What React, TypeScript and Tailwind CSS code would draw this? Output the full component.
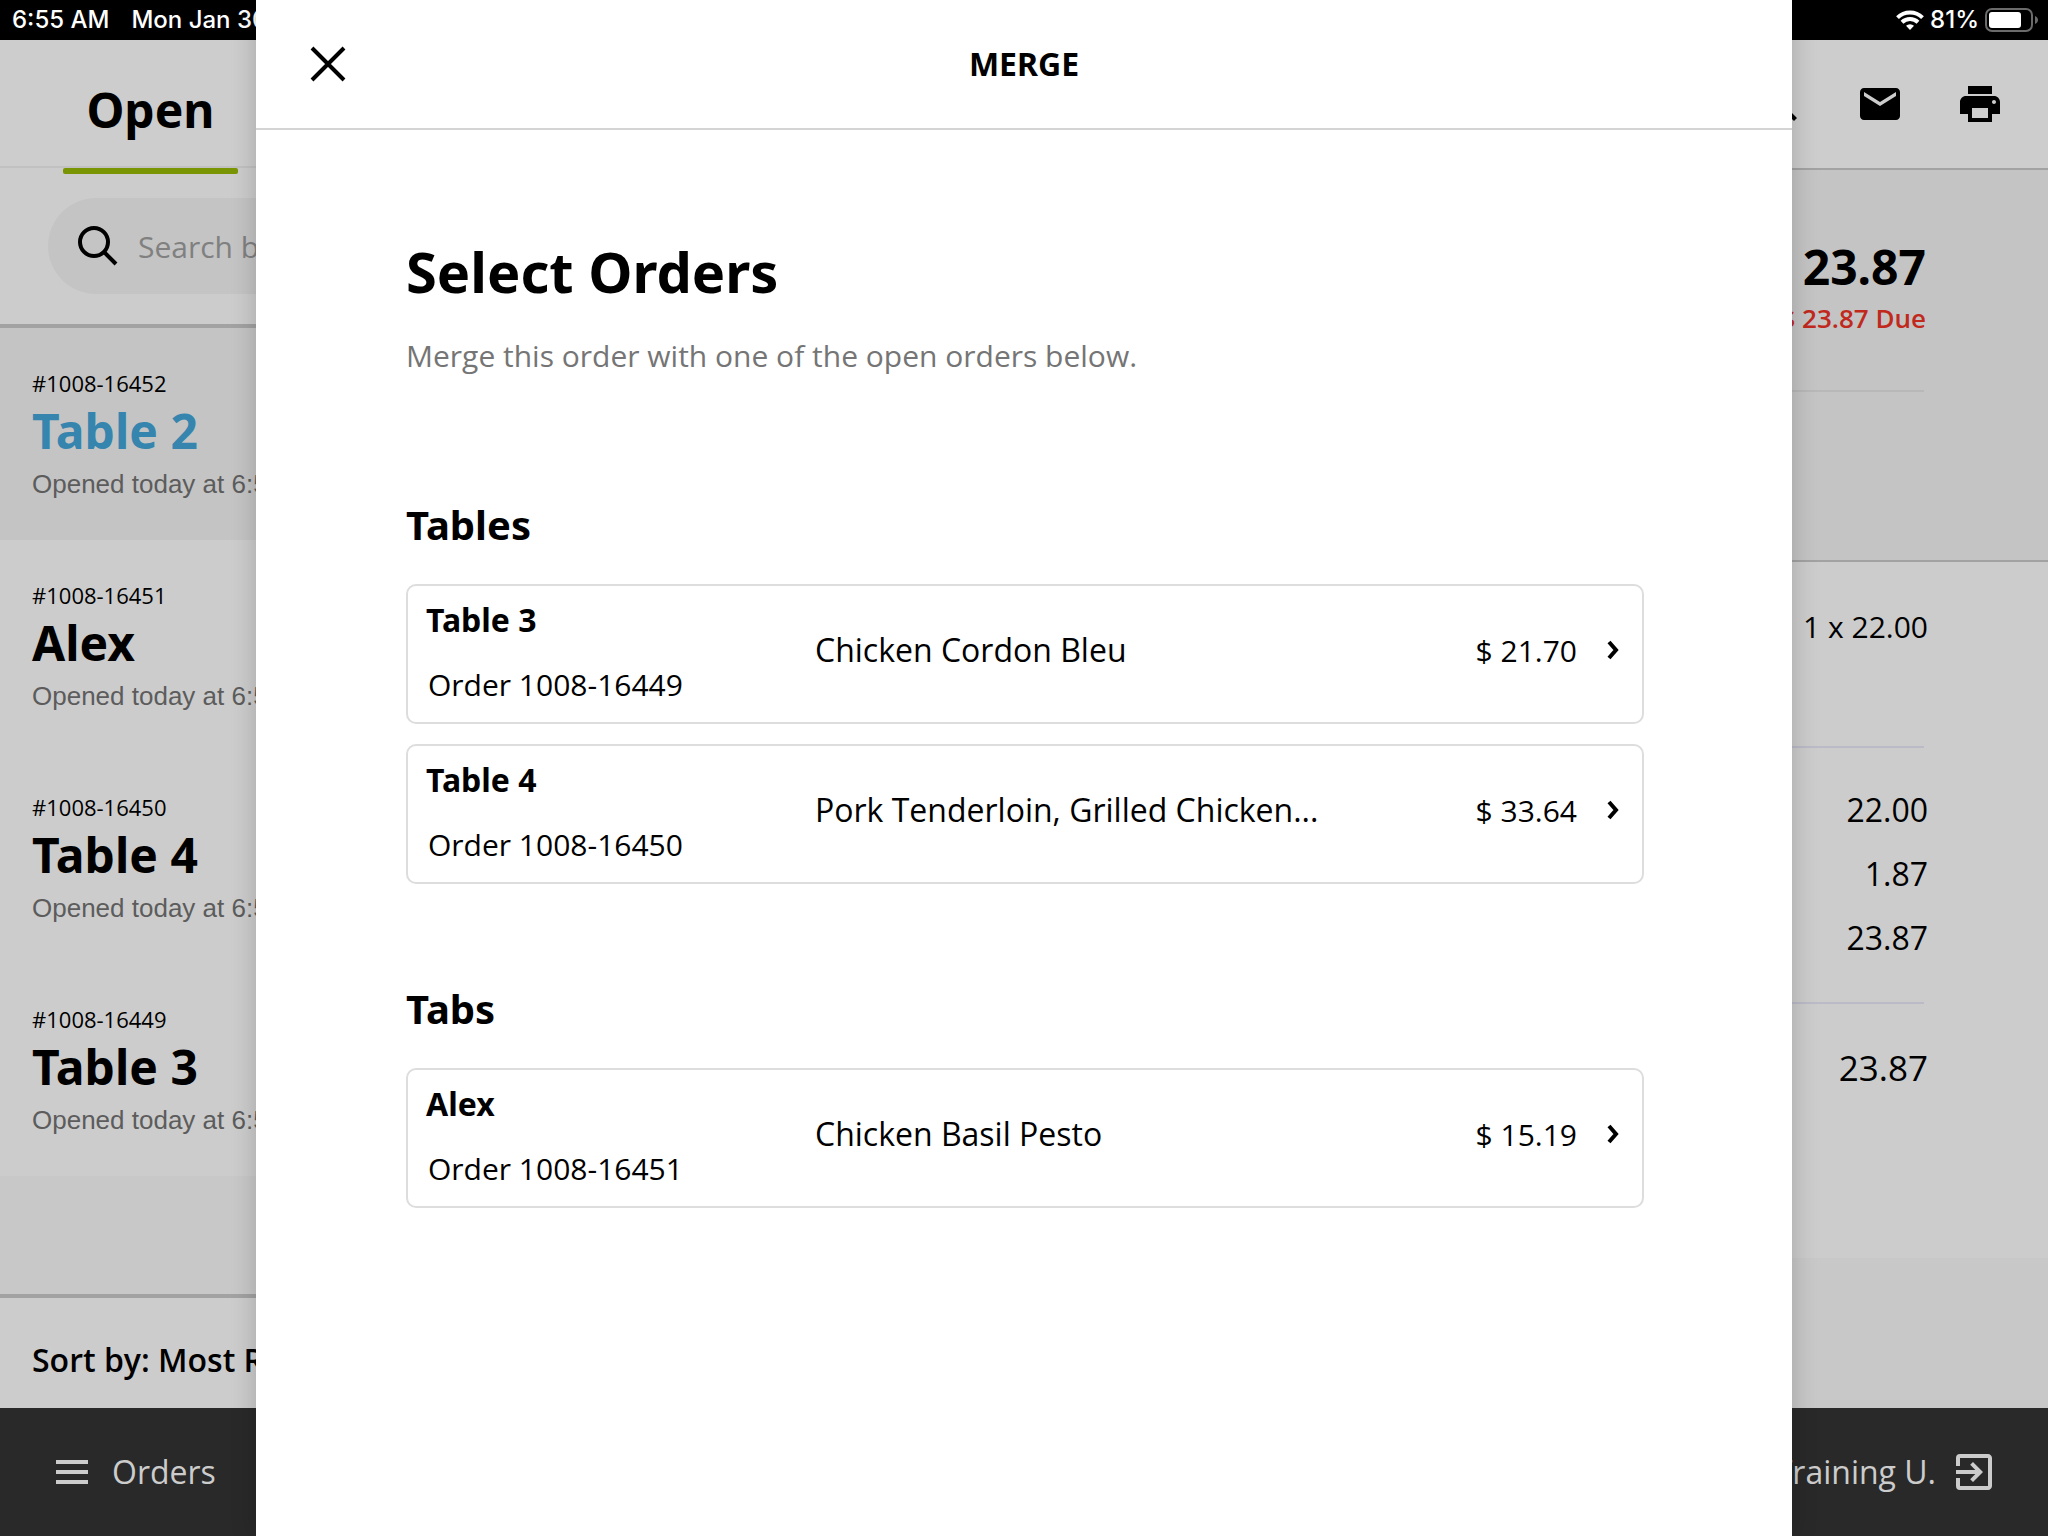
import { MdExitToApp, MdMail, MdPrint, MdSearch } from "react-icons/md"

const openOrders = [
  { id: "1008-16452", name: "Table 2", time: "Opened today at 6:54 AM" },
  { id: "1008-16451", name: "Alex", time: "Opened today at 6:53 AM" },
  { id: "1008-16450", name: "Table 4", time: "Opened today at 6:52 AM" },
  { id: "1008-16449", name: "Table 3", time: "Opened today at 6:51 AM" },
]

const groups = [
  {
    title: "Tables",
    orders: [
      { name: "Table 3", id: "1008-16449", items: "Chicken Cordon Bleu", total: "$ 21.70" },
      { name: "Table 4", id: "1008-16450", items: "Pork Tenderloin, Grilled Chicken...", total: "$ 33.64" },
    ],
  },
  {
    title: "Tabs",
    orders: [{ name: "Alex", id: "1008-16451", items: "Chicken Basil Pesto", total: "$ 15.19" }],
  },
]

const StatusBar = () => {
  return (
    <div className="flex h-10 shrink-0 items-center justify-between bg-black pr-2.5 pl-3 font-[Inter,sans-serif] text-2xl font-medium text-white">
      <div className="flex gap-[22px]">
        <span>6:55 AM</span>
        <span>Mon Jan 30</span>
      </div>
      <div className="flex items-center gap-1.5">
        <svg width="28" height="20" viewBox="0 0 28 20" fill="none" stroke="white" strokeWidth="4">
          <path d="M1.5 7.6a18 18 0 0 1 25 0" />
          <path d="M6 12.2a11.6 11.6 0 0 1 16 0" />
          <path d="M14 20l-4-4.2a6 6 0 0 1 8 0z" fill="white" stroke="none" />
        </svg>
        <span>81%</span>
        <svg width="53" height="24" viewBox="0 0 53 24">
          <rect x="1" y="1" width="46" height="22" rx="6" fill="none" stroke="#6b6b6b" strokeWidth="2" />
          <rect x="4" y="4" width="32" height="16" rx="3" fill="white" />
          <path d="M50 8c4 1.500 4 6.500 0 8z" fill="#6b6b6b" />
        </svg>
      </div>
    </div>
  )
}

const OrderList = () => {
  return (
    <aside className="flex w-[38%] shrink-0 flex-col bg-[#cccccc]">
      <div className="flex h-32 shrink-0 border-b-2 border-[#c1c1c1] bg-[#cdcdcd] pl-[63px]">
        <button className="relative h-32 w-[175px] pt-3 font-['Noto_Sans',sans-serif] text-[48px] leading-[116px] font-bold">
          Open
          <span className="absolute -bottom-1.5 left-0 h-1.5 w-full rounded-xs bg-[#7a9504]" />
        </button>
      </div>
      <div className="shrink-0 border-b-4 border-[#a2a2a2] px-12 pt-[30px] pb-[30px]">
        <label className="flex h-24 items-center gap-5 rounded-full bg-[#c4c4c4] pl-[29px]">
          <svg width="41" height="41" viewBox="0 0 41 41" fill="none" stroke="black" strokeWidth="4" className="mb-0.5 shrink-0">
            <circle cx="17" cy="17" r="14" />
            <path d="M27 27l12 12" />
          </svg>
          <input
            type="text"
            aria-label="Search orders"
            placeholder="Search by name"
            className="w-full bg-transparent text-[30px] placeholder:text-[#808080] outline-none"
          />
        </label>
      </div>
      <div className="flex-1 bg-[#c8c8c8]">
        {openOrders.map((order, i) => (
          <button
            key={order.id}
            className={`block h-[212px] w-full px-8 pt-1 text-left ${i === 0 ? "bg-[#c4c4c4]" : "bg-[#cccccc]"}`}
          >
            <span className="block text-[22px] leading-[34px]">#{order.id}</span>
            <span
              className={`block font-['Noto_Sans',sans-serif] text-[48px] leading-[62px] font-bold ${i === 0 ? "text-[#3685ae]" : "text-black"}`}
            >
              {order.name}
            </span>
            <span className="block font-['Liberation_Sans',sans-serif] text-[26px] leading-11 text-[#5c5c5c]">
              {order.time}
            </span>
          </button>
        ))}
      </div>
      <button className="h-[114px] shrink-0 border-t-4 border-[#a2a2a2] px-8 pt-3.5 text-left text-[32px] font-semibold">
        Sort by: Most Recent
      </button>
    </aside>
  )
}

const OrderDetail = () => {
  return (
    <section className="flex flex-1 flex-col bg-[#c8c8c8] text-right">
      <div className="flex h-[130px] shrink-0 items-center justify-end gap-[52px] border-b-2 border-[#a2a2a2] bg-[#cdcdcd] pr-11">
        <button aria-label="Search"><MdSearch size={48} /></button>
        <button aria-label="Email"><MdMail size={48} /></button>
        <button aria-label="Print"><MdPrint size={48} /></button>
      </div>
      <div className="h-[392px] shrink-0 border-b-2 border-[#a2a2a2] bg-[#c4c4c4] pt-[68px] pr-[122px]">
        <p className="font-['Noto_Sans',sans-serif] text-[48px] leading-[58px] font-bold">$ 23.87</p>
        <p className="text-[26px] leading-11 font-semibold text-[#c1291d]">$ 23.87 Due</p>
        <hr className="mt-[50px] mr-0.5 border-t-2 border-[#b8b8b8]" />
      </div>
      <div className="h-[696px] shrink-0 bg-[#cccccc] pr-[124px]">
        <div className="h-[186px] border-b-2 border-[#bbbbc8] pt-10">
          <p className="-mr-1 text-[30px] leading-[50px]">1 x 22.00</p>
        </div>
        <div className="h-64 border-b-2 border-[#bbbbc8] pt-[30px]">
          <div className="-mr-1 text-[32px] leading-16">
            <p>22.00</p>
            <p>1.87</p>
            <p>23.87</p>
          </div>
        </div>
        <p className="-mr-1 pt-8 text-[35px] leading-16">23.87</p>
      </div>
    </section>
  )
}

const Footer = () => {
  return (
    <footer className="flex h-32 shrink-0 items-center justify-between bg-[#292929] pl-14 pr-[50px] text-[32px] text-[#cccccc]">
      <button className="flex items-center gap-6">
        <svg width="32" height="24" viewBox="0 0 32 24" fill="currentColor">
          <path d="M0 0h32v4H0zM0 10h32v4H0zM0 20h32v4H0z" />
        </svg>
        Orders
      </button>
      <button className="flex items-center gap-3.5">
        Training U.
        <MdExitToApp size={48} />
      </button>
    </footer>
  )
}

const MergeDialog = () => {
  return (
    <div
      role="dialog"
      aria-label="Merge"
      className="absolute inset-y-0 left-1/8 w-3/4 bg-white shadow-[0_0_24px_rgba(0,0,0,0.2)]"
    >
      <header className="grid h-[130px] grid-cols-[1fr_auto_1fr] items-center border-b-2 border-[#d4d4d4] px-[54px]">
        <button aria-label="Close" className="justify-self-start">
          <svg width="36" height="36" viewBox="0 0 36 36" stroke="black" strokeWidth="4">
            <path d="M2 2l32 32M34 2L2 34" />
          </svg>
        </button>
        <h2 className="font-['Noto_Sans',sans-serif] text-[32px] font-bold">MERGE</h2>
      </header>
      <main className="pt-[103px] pr-[148px] pl-[150px]">
        <h1 className="font-['Noto_Sans',sans-serif] text-[56px] leading-[76px] font-bold">Select Orders</h1>
        <p className="mt-[25px] text-[30px] leading-11 text-[#757575]">Merge this order with one of the open orders below.</p>
        <div className="mt-[119px] flex flex-col gap-[97px]">
          {groups.map((group) => (
            <section key={group.title}>
              <h3 className="font-['Noto_Sans',sans-serif] text-[40px] leading-14 font-bold">{group.title}</h3>
              <div className="mt-[31px] flex flex-col gap-5">
                {group.orders.map((order) => (
                  <button
                    key={order.id}
                    className="flex h-[140px] items-center rounded-[10px] border-2 border-[#dddddd] pr-[23px] pb-2 pl-[18px] text-left"
                  >
                    <span className="w-[389px] shrink-0 pt-1.5">
                      <span className="block font-['Noto_Sans',sans-serif] text-[32px] leading-16 font-bold">{order.name}</span>
                      <span className="block pl-0.5 text-[30px] leading-[66px]">Order {order.id}</span>
                    </span>
                    <span className="flex-1 text-[32px]">{order.items}</span>
                    <span className="text-[30px]">{order.total}</span>
                    <svg width="12" height="20" viewBox="0 0 12 20" fill="none" stroke="black" strokeWidth="4" className="ml-[30px]">
                      <path d="M2 2l7 8-7 8" />
                    </svg>
                  </button>
                ))}
              </div>
            </section>
          ))}
        </div>
      </main>
    </div>
  )
}

export default function App() {
  return (
    <div className="relative flex h-screen flex-col overflow-hidden bg-[#c8c8c8] font-['Open_Sans',sans-serif] text-black">
      <StatusBar />
      <div className="flex min-h-0 flex-1">
        <OrderList />
        <OrderDetail />
      </div>
      <Footer />
      <MergeDialog />
    </div>
  )
}
